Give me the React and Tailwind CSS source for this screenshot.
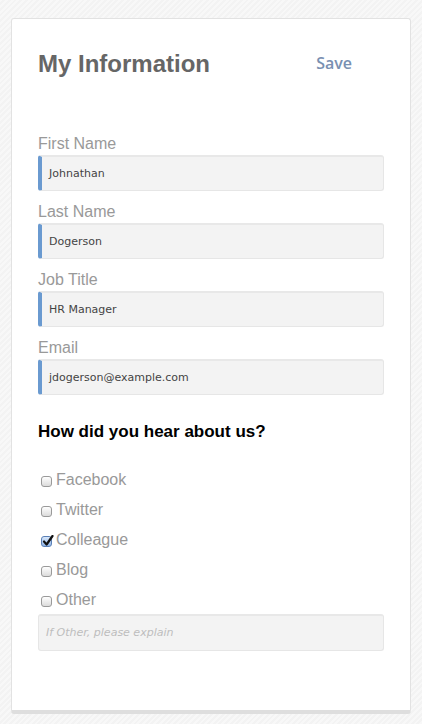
import React, { useState } from 'react';

const FIELDS = [
  { key: 'first', label: 'First Name', value: 'Johnathan' },
  { key: 'last', label: 'Last Name', value: 'Dogerson' },
  { key: 'job', label: 'Job Title', value: 'HR Manager' },
  { key: 'email', label: 'Email', value: 'jdogerson@example.com' }
];

const SOURCES = ['Facebook', 'Twitter', 'Colleague', 'Blog', 'Other'];

const Check = ({ checked, onClick }) => (
  <span
    onClick={onClick}
    className={`relative ml-[3px] mr-[4px] mb-[3px] inline-block h-[11px] w-[11px] shrink-0 cursor-pointer rounded-[3px] border ${checked ? 'border-[#5a7fb5] bg-gradient-to-b from-[#d9e8fb] to-[#8fb4e6]' : 'border-[#9a9a9a] bg-gradient-to-b from-white to-[#dcdcdc]'}`}
  >
    {checked && (
      <svg viewBox="0 0 12 12" className="absolute left-[0px] top-[-2px] h-[12px] w-[12px]">
        <path d="M2 6.5 L4.6 9.5 L10.5 1" fill="none" stroke="#111" strokeWidth="2.2" strokeLinecap="round" strokeLinejoin="round" />
      </svg>
    )}
  </span>
);

export default function App() {
  const [checked, setChecked] = useState({ Colleague: true });

  return (
    <div className="min-h-[724px] w-full bg-[#f6f6f6] bg-[repeating-linear-gradient(135deg,#f8f8f8_0px,#f8f8f8_2px,#f3f3f3_2px,#f3f3f3_4px)] pt-[18px] font-['Liberation_Sans',Arial,sans-serif]">
      <div className="ml-[11px] w-[400px] rounded-[3px] border border-b-[4px] border-[#e2e2e2] border-b-[#dedede] bg-white px-[26px] pb-[59px] pt-[31px]">
        <div className="flex items-center justify-between pr-[32px]">
          <h1 className="text-[24px] font-bold leading-[28px] text-[#666]">My Information</h1>
          <button className="-mt-[3px] font-['Open_Sans',sans-serif] text-[16px] font-semibold leading-[24px] text-[#7990b1]">Save</button>
        </div>

        <form className="mt-[56px] flex flex-col gap-[11px]">
          {FIELDS.map(f => (
            <div key={f.key} className="flex flex-col gap-[1px]">
              <label className="text-[16px] leading-[20px] text-[#999]">{f.label}</label>
              <div className="flex h-[36px] items-center rounded-[3px] border border-[#e6e6e6] border-l-[4px] border-l-[#6a9ad0] border-t-[2px] border-t-[#e8e8e8] bg-[#f3f3f3] pl-[7px] pt-[2px] font-['DejaVu_Sans',sans-serif] text-[11px] text-[#444]">
                {f.value}
              </div>
            </div>
          ))}
        </form>

        <h2 className="mt-[27px] text-[17px] font-bold leading-[20px] text-black">How did you hear about us?</h2>

        <div className="mt-[28px] flex flex-col gap-[10px]">
          {SOURCES.map(s => (
            <label key={s} className="flex items-end text-[16px] leading-[20px] text-[#999]">
              <Check checked={!!checked[s]} onClick={() => setChecked({ ...checked, [s]: !checked[s] })} />
              {s}
            </label>
          ))}
        </div>

        <div className="mt-[4px] flex h-[37px] items-center rounded-[3px] border border-[#e6e6e6] border-t-[2px] border-t-[#e8e8e8] bg-[#f3f3f3] pl-[7px] font-['DejaVu_Sans',sans-serif] text-[11px] italic text-[#bdbdbd]">
          If Other, please explain
        </div>
      </div>
    </div>
  );
}
